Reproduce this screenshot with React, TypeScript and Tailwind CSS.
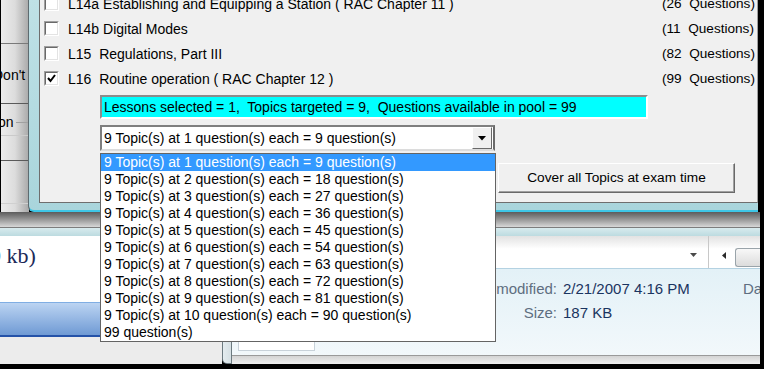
import React from "react";

const rows = [
  { code: "L14a", sep: " ", name: "Establishing and Equipping a Station ( RAC Chapter 11 )", count: "(26  Questions)", checked: false },
  { code: "L14b", sep: " ", name: "Digital Modes", count: "(11  Questions)", checked: false },
  { code: "L15", sep: "  ", name: "Regulations, Part III", count: "(82  Questions)", checked: false },
  { code: "L16", sep: "  ", name: "Routine operation ( RAC Chapter 12 )", count: "(99  Questions)", checked: true },
];

const items = Array.from({ length: 10 }, (_, i) => `9 Topic(s) at ${i + 1} question(s) each = ${9 * (i + 1)} question(s)`).concat([
  "99 question(s)",
]);

function Checkbox({ checked }: { checked: boolean }) {
  return (
    <div className="w-[15px] h-[15px] shrink-0 border border-t-[#a0a0a0] border-l-[#a0a0a0] border-b-white border-r-white">
      <div className="w-full h-full bg-white border border-t-[#696969] border-l-[#696969] border-b-[#e3e3e3] border-r-[#e3e3e3] flex items-center justify-center">
        {checked && (
          <svg width="9" height="9" viewBox="0 0 9 9">
            <polyline points="1,4 3.5,7 8,1" fill="none" stroke="#000" strokeWidth="2" />
          </svg>
        )}
      </div>
    </div>
  );
}

export default function App() {
  return (
    <div className="relative w-[764px] h-[369px] overflow-hidden bg-black font-['Liberation_Sans',Arial,sans-serif] text-black">
      {/* background window on the left */}
      <div className="absolute left-0 top-0 w-[29px] h-[212px] border-l border-black bg-gradient-to-r from-[#ececec] via-[#dcdcdc] to-[#a8a8a8] flex flex-col overflow-hidden">
        <div className="h-[43px]" />
        <div className="h-px bg-[#7a7a7a]" />
        <div className="h-[59px] pt-[23px] text-[14px] leading-[16px] whitespace-nowrap -ml-[8px]">Don't</div>
        <div className="h-px bg-[#5a5a5a]" />
        <div className="h-[10px]" />
        <div className="h-[16px] flex items-center text-[14px] leading-[16px] -ml-[3px]">
          <span>on</span>
          <div className="flex-1 h-px bg-[#a0a0a0] ml-[2px]" />
        </div>
        <div className="h-[5px]" />
        <div className="h-px bg-[#cacaca]" />
        <div className="h-[24px]" />
        <div className="h-px bg-[#5a5a5a]" />
        <div className="h-[42px]" />
        <div className="h-px bg-[#d0d0d0]" />
      </div>

      {/* main dialog */}
      <div className="absolute left-[28px] top-0 w-[730px] h-[212px] border-l border-[#5e6b70] border-b-2 border-b-[#3ec6e6] rounded-bl-[6px] bg-gradient-to-b from-[#bfe1e6] to-[#a9d5dc] pl-[10px] pb-[7px]">
        <div className="h-full bg-[#f0f0f0] border-l border-b border-[#6e6e6e] border-r border-r-[#a0a0a0] flex flex-col pl-[4px] text-[14px] leading-[16px]">
          <div className="-mt-[9px] flex flex-col">
            {rows.map((r) => (
              <div key={r.code} className="h-[25px] flex items-center">
                <Checkbox checked={r.checked} />
                <div className="ml-[9px] w-[594px] shrink-0 whitespace-pre">
                  {r.code}
                  {r.sep}
                  {r.name}
                </div>
                <div className="whitespace-pre text-[13.6px]">{r.count}</div>
              </div>
            ))}
          </div>
          <div className="mt-[4px] ml-[56px] w-[548px] h-[24px] bg-[#00ffff] border-2 border-t-[#8c8c8c] border-l-[#8c8c8c] border-b-white border-r-white flex items-center pl-[2px] whitespace-pre">
            Lessons selected = 1,  Topics targeted = 9,  Questions available in pool = 99
          </div>
          <div className="mt-[6px] ml-[56px] w-[395px] h-[26px] bg-white border-2 border-t-[#7f7f7f] border-l-[#7f7f7f] border-b-[#dcdcdc] border-r-[#6a6a6a] flex items-center pl-[2px]">
            <div className="flex-1 whitespace-nowrap overflow-hidden">{items[0]}</div>
            <div className="w-[20px] h-[22px] bg-[#f0f0f0] border border-t-white border-l-white border-b-[#696969] border-r-[#696969] flex items-center justify-center mr-[1px]">
              <svg width="8" height="5" viewBox="0 0 8 5">
                <polygon points="0,0 8,0 4,4.5" fill="#000" />
              </svg>
            </div>
          </div>
          <div className="mt-[12px] ml-[454px] w-[237px] h-[30px] bg-[#f0f0f0] border border-t-white border-l-white border-b-[#696969] border-r-[#696969] shadow-[inset_-1px_-1px_0_#a0a0a0] flex items-center justify-center whitespace-nowrap text-[13.7px]">
            Cover all Topics at exam time
          </div>
        </div>
      </div>

      {/* bottom windows */}
      <div className="absolute left-0 top-[212px] w-[760px] h-[152px] flex flex-col">
        <div className="h-[15px] bg-gradient-to-b from-[#5c5c5c] to-[#d8d8d8]" />
        <div className="h-px bg-[#7d7d7d]" />
        <div className="h-[8px] bg-gradient-to-b from-[#d8ebee] to-[#bcdbe0]" />
        <div className="flex-1 flex min-h-0">
          <div className="w-[222px] shrink-0 flex flex-col overflow-hidden">
            <div className="h-[66px] shrink-0 bg-white pt-[8px] font-['Liberation_Serif',serif] text-[22px] leading-[24px] text-[#1c2a58] whitespace-pre -ml-[10px]">
              9 kb)
            </div>
            <div className="h-[35px] shrink-0 border-t border-[#80aee3] border-b-2 border-b-[#2452a8] bg-gradient-to-b from-[#bcd4f2] to-[#6f9ad4]" />
            <div className="flex-1 bg-[#ececec]" />
          </div>
          <div className="flex-1 min-w-0 flex">
            <div className="w-[10px] shrink-0 border-l border-r border-[#6c7a80] bg-gradient-to-r from-[#e4ecef] to-[#d6e0e4] rounded-bl-[5px] border-b border-b-[#6c7a80]" />
            <div className="flex-1 min-w-0 flex flex-col">
              <div className="h-[32px] shrink-0 bg-gradient-to-b from-[#e2e2e2] to-white to-[40%] flex justify-end items-stretch">
                <div className="w-[20px] pr-[10px] flex items-center justify-center pt-[6px]">
                  <svg width="7" height="4" viewBox="0 0 7 4">
                    <polygon points="0,0 7,0 3.5,4" fill="#4a4a4a" />
                  </svg>
                </div>
                <div className="w-px bg-[#c8c8c8] mr-[13px]" />
                <div className="w-[13px] flex items-center pt-[6px]">
                  <svg width="4" height="7" viewBox="0 0 4 7">
                    <polygon points="4,0 4,7 0,3.5" fill="#2a2a2a" />
                  </svg>
                </div>
                <div className="w-[25px] mt-[12px] mb-px rounded-l-[3px] border border-r-0 border-[#9aa4aa] bg-gradient-to-b from-[#f8f8f8] to-[#dcdcdc]" />
              </div>
              <div className="h-[87px] shrink-0 border-t border-[#b4d2e2] bg-gradient-to-b from-[#e3f1f7] to-[#f2f8fb] flex text-[15px] leading-[16px] overflow-hidden whitespace-nowrap">
                <div className="w-[325px] shrink-0 flex flex-col items-end pt-[12px] gap-[8px] text-[#5e6e80]">
                  <div>Date modified:</div>
                  <div>Size:</div>
                  <div className="self-start ml-[6px] mt-[5px] w-[77px] h-[17px] border border-[#c8d2da] bg-white" />
                </div>
                <div className="ml-[6px] w-[180px] shrink-0 flex flex-col pt-[12px] gap-[8px] text-[#1a3460]">
                  <div>2/21/2007 4:16 PM</div>
                  <div>187 KB</div>
                </div>
                <div className="shrink-0 pt-[12px] text-[#5e6e80]">Date created:</div>
              </div>
              <div className="h-px bg-[#9a9a9a]" />
              <div className="flex-1 bg-gradient-to-b from-[#d4d4d4] to-[#efefef]" />
            </div>
          </div>
        </div>
      </div>

      {/* open dropdown list */}
      <div className="absolute left-[100px] top-[153px] w-[396px] h-[189px] bg-white border border-[#646464] text-[14px] leading-[17px]">
        {items.map((t, i) => (
          <div
            key={t}
            className={`h-[17px] pl-[3px] whitespace-nowrap ${i === 0 ? "bg-[#3399ff] text-white" : ""}`}
          >
            {t}
          </div>
        ))}
      </div>
    </div>
  );
}
